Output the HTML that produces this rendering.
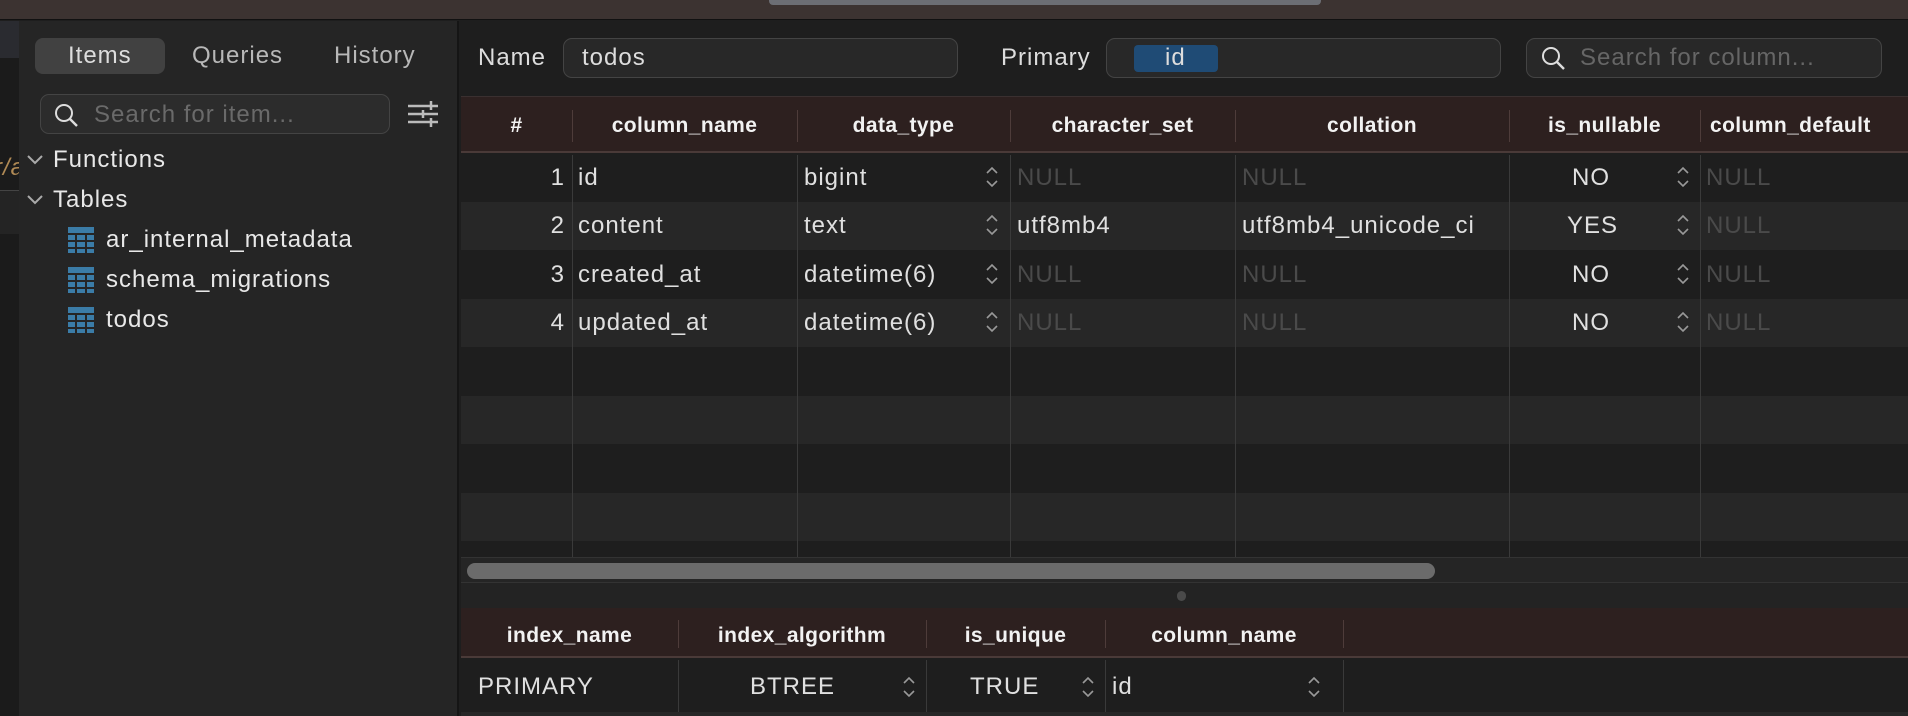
<!DOCTYPE html>
<html><head><meta charset="utf-8"><style>
*{box-sizing:border-box;margin:0;padding:0}
body{width:1908px;height:716px;overflow:hidden;background:#1e1e1e;font-family:"Liberation Sans",sans-serif;color:#e0e0e0;position:relative}
.a{position:absolute}
.t{position:absolute;white-space:nowrap;font-size:24px;line-height:26px;letter-spacing:1px}
.h{position:absolute;white-space:nowrap;font-size:21px;font-weight:bold;color:#f2f2f2;text-align:center;line-height:24px;letter-spacing:0.4px}
.null{color:#4a4a4a}
.vl{position:absolute;width:1px;background:#3a3a3a}
.st{position:absolute;width:12px;height:22px}
</style></head><body>
<div class="a" style="left:0;top:0;width:1908px;height:20px;background:#3c3331;border-bottom:1px solid #111"></div>
<div class="a" style="left:769px;top:0;width:552px;height:5px;background:#6c6e74;border-radius:0 0 4px 4px"></div>
<div class="a" style="left:0;top:21px;width:19px;height:695px;background:#1b1b1b"></div>
<div class="a" style="left:0;top:21px;width:19px;height:37px;background:#2a2b30"></div>
<div class="a" style="left:0;top:190px;width:19px;height:44px;background:#242424;border-top:1px solid #444"></div>
<div class="t" style="left:-6px;top:155px;color:#b08a55;font-style:italic">r/a</div>
<div class="a" style="left:19px;top:21px;width:440px;height:695px;background:#252525;border-right:2px solid #151515"></div>
<div class="a" style="left:35px;top:38px;width:130px;height:36px;background:#414141;border-radius:8px"></div>
<div class="t" style="left:68px;top:43px;color:#ddd">Items</div>
<div class="t" style="left:192px;top:43px;color:#b8b8b8">Queries</div>
<div class="t" style="left:334px;top:43px;color:#b8b8b8">History</div>
<div class="a" style="left:40px;top:94px;width:350px;height:40px;background:#2c2c2c;border:1px solid #444;border-radius:9px"></div>
<svg class="a" style="left:53px;top:103px" width="28" height="26"><circle cx="11" cy="10" r="8" fill="none" stroke="#ddd" stroke-width="2"/><line x1="17" y1="16" x2="24" y2="23" stroke="#ddd" stroke-width="2.4"/></svg>
<div class="t" style="left:94px;top:102px;color:#6a6a6a">Search for item...</div>
<svg class="a" style="left:407px;top:100px" width="32" height="28" stroke="#bbb" stroke-width="2.5"><line x1="1" y1="6" x2="31" y2="6"/><line x1="1" y1="14" x2="31" y2="14"/><line x1="1" y1="22" x2="31" y2="22"/><line x1="24" y1="1" x2="24" y2="10"/><line x1="16" y1="10" x2="16" y2="18"/><line x1="24" y1="18" x2="24" y2="27"/></svg>
<svg class="a" style="left:27px;top:155px" width="16" height="10"><polyline points="1,1 8,8 15,1" fill="none" stroke="#aaa" stroke-width="2"/></svg>
<div class="t" style="left:53px;top:147px;color:#e8e8e8">Functions</div>
<svg class="a" style="left:27px;top:195px" width="16" height="10"><polyline points="1,1 8,8 15,1" fill="none" stroke="#aaa" stroke-width="2"/></svg>
<div class="t" style="left:53px;top:187px;color:#e8e8e8">Tables</div>
<svg width="0" height="0" style="position:absolute"><defs><g id="ti"><rect x="0" y="0" width="26" height="6" fill="#3b7ca7"/><g fill="#3b7ca7"><rect x="0" y="8" width="7" height="5"/><rect x="9" y="8" width="8" height="5"/><rect x="19" y="8" width="7" height="5"/><rect x="0" y="15" width="7" height="5"/><rect x="9" y="15" width="8" height="5"/><rect x="19" y="15" width="7" height="5"/><rect x="0" y="22" width="7" height="4"/><rect x="9" y="22" width="8" height="4"/><rect x="19" y="22" width="7" height="4"/></g></g></defs></svg>
<svg class="a" style="left:68px;top:227px" width="26" height="26"><use href="#ti"/></svg>
<div class="t" style="left:106px;top:227px;color:#e8e8e8">ar_internal_metadata</div>
<svg class="a" style="left:68px;top:267px" width="26" height="26"><use href="#ti"/></svg>
<div class="t" style="left:106px;top:267px;color:#e8e8e8">schema_migrations</div>
<svg class="a" style="left:68px;top:307px" width="26" height="26"><use href="#ti"/></svg>
<div class="t" style="left:106px;top:307px;color:#e8e8e8">todos</div>
<div class="t" style="left:478px;top:45px;color:#ddd">Name</div>
<div class="a" style="left:563px;top:38px;width:395px;height:40px;background:#282828;border:1px solid #444;border-radius:9px"></div>
<div class="t" style="left:582px;top:45px;color:#ddd">todos</div>
<div class="t" style="left:1001px;top:45px;color:#ddd">Primary</div>
<div class="a" style="left:1106px;top:38px;width:395px;height:40px;background:#282828;border:1px solid #444;border-radius:9px"></div>
<div class="a" style="left:1134px;top:45px;width:84px;height:27px;background:#1f4b75;border-radius:4px"></div>
<div class="t" style="left:1165px;top:45px;color:#ddd">id</div>
<div class="a" style="left:1526px;top:38px;width:356px;height:40px;background:#282828;border:1px solid #444;border-radius:9px"></div>
<svg class="a" style="left:1540px;top:46px" width="28" height="26"><circle cx="11" cy="10" r="8" fill="none" stroke="#ddd" stroke-width="2"/><line x1="17" y1="16" x2="24" y2="23" stroke="#ddd" stroke-width="2.4"/></svg>
<div class="t" style="left:1580px;top:45px;color:#666">Search for column...</div>
<div class="a" style="left:461px;top:96px;width:1447px;height:57px;background:#2d201f;border-top:1px solid #3a3030;border-bottom:2px solid #4a3a38"></div>
<div class="a" style="left:461px;top:153px;width:1447px;height:49px;background:#1e1e1e"></div>
<div class="a" style="left:461px;top:202px;width:1447px;height:48px;background:#272727"></div>
<div class="a" style="left:461px;top:250px;width:1447px;height:49px;background:#1e1e1e"></div>
<div class="a" style="left:461px;top:299px;width:1447px;height:48px;background:#272727"></div>
<div class="a" style="left:461px;top:347px;width:1447px;height:49px;background:#1e1e1e"></div>
<div class="a" style="left:461px;top:396px;width:1447px;height:48px;background:#272727"></div>
<div class="a" style="left:461px;top:444px;width:1447px;height:49px;background:#1e1e1e"></div>
<div class="a" style="left:461px;top:493px;width:1447px;height:48px;background:#272727"></div>
<div class="a" style="left:461px;top:541px;width:1447px;height:16px;background:#1e1e1e"></div>
<div class="vl" style="left:572px;top:110px;height:32px;background:#4e3c3a"></div>
<div class="vl" style="left:797px;top:110px;height:32px;background:#4e3c3a"></div>
<div class="vl" style="left:1010px;top:110px;height:32px;background:#4e3c3a"></div>
<div class="vl" style="left:1235px;top:110px;height:32px;background:#4e3c3a"></div>
<div class="vl" style="left:1509px;top:110px;height:32px;background:#4e3c3a"></div>
<div class="vl" style="left:1700px;top:110px;height:32px;background:#4e3c3a"></div>
<div class="vl" style="left:572px;top:155px;height:402px"></div>
<div class="vl" style="left:797px;top:155px;height:402px"></div>
<div class="vl" style="left:1010px;top:155px;height:402px"></div>
<div class="vl" style="left:1235px;top:155px;height:402px"></div>
<div class="vl" style="left:1509px;top:155px;height:402px"></div>
<div class="vl" style="left:1700px;top:155px;height:402px"></div>
<div class="h" style="left:461px;width:111px;top:114px">#</div>
<div class="h" style="left:572px;width:225px;top:114px">column_name</div>
<div class="h" style="left:797px;width:213px;top:114px">data_type</div>
<div class="h" style="left:1010px;width:225px;top:114px">character_set</div>
<div class="h" style="left:1235px;width:274px;top:114px">collation</div>
<div class="h" style="left:1509px;width:191px;top:114px">is_nullable</div>
<div class="h" style="left:1700px;width:220px;top:114px;text-align:left;padding-left:10px">column_default</div>
<svg width="0" height="0" style="position:absolute"><defs><g id="st" fill="none" stroke="#999" stroke-width="1.6"><polyline points="1,7 6,2 11,7"/><polyline points="1,15 6,20 11,15"/></g></defs></svg>
<div class="t" style="left:461px;width:104px;text-align:right;top:165px">1</div>
<div class="t" style="left:578px;top:165px">id</div>
<div class="t" style="left:804px;top:165px">bigint</div>
<svg class="st" style="left:986px;top:166px"><use href="#st"/></svg>
<div class="t null" style="left:1017px;top:165px">NULL</div>
<div class="t null" style="left:1242px;top:165px">NULL</div>
<div class="t" style="left:1572px;top:165px">NO</div>
<svg class="st" style="left:1677px;top:166px"><use href="#st"/></svg>
<div class="t null" style="left:1706px;top:165px">NULL</div>
<div class="t" style="left:461px;width:104px;text-align:right;top:213px">2</div>
<div class="t" style="left:578px;top:213px">content</div>
<div class="t" style="left:804px;top:213px">text</div>
<svg class="st" style="left:986px;top:214px"><use href="#st"/></svg>
<div class="t" style="left:1017px;top:213px">utf8mb4</div>
<div class="t" style="left:1242px;top:213px">utf8mb4_unicode_ci</div>
<div class="t" style="left:1567px;top:213px">YES</div>
<svg class="st" style="left:1677px;top:214px"><use href="#st"/></svg>
<div class="t null" style="left:1706px;top:213px">NULL</div>
<div class="t" style="left:461px;width:104px;text-align:right;top:262px">3</div>
<div class="t" style="left:578px;top:262px">created_at</div>
<div class="t" style="left:804px;top:262px">datetime(6)</div>
<svg class="st" style="left:986px;top:263px"><use href="#st"/></svg>
<div class="t null" style="left:1017px;top:262px">NULL</div>
<div class="t null" style="left:1242px;top:262px">NULL</div>
<div class="t" style="left:1572px;top:262px">NO</div>
<svg class="st" style="left:1677px;top:263px"><use href="#st"/></svg>
<div class="t null" style="left:1706px;top:262px">NULL</div>
<div class="t" style="left:461px;width:104px;text-align:right;top:310px">4</div>
<div class="t" style="left:578px;top:310px">updated_at</div>
<div class="t" style="left:804px;top:310px">datetime(6)</div>
<svg class="st" style="left:986px;top:311px"><use href="#st"/></svg>
<div class="t null" style="left:1017px;top:310px">NULL</div>
<div class="t null" style="left:1242px;top:310px">NULL</div>
<div class="t" style="left:1572px;top:310px">NO</div>
<svg class="st" style="left:1677px;top:311px"><use href="#st"/></svg>
<div class="t null" style="left:1706px;top:310px">NULL</div>
<div class="a" style="left:461px;top:557px;width:1447px;height:26px;background:#252525;border-top:1px solid #333;border-bottom:1px solid #333"></div>
<div class="a" style="left:467px;top:563px;width:968px;height:16px;background:#6b6b6b;border-radius:8px"></div>
<div class="a" style="left:461px;top:583px;width:1447px;height:25px;background:#232323"></div>
<div class="a" style="left:1177px;top:591px;width:9px;height:10px;background:#4a4a4a;border-radius:5px"></div>
<div class="a" style="left:461px;top:608px;width:1447px;height:50px;background:#2d201f;border-bottom:2px solid #4a3a38"></div>
<div class="a" style="left:461px;top:658px;width:1447px;height:58px;background:#1e1e1e"></div>
<div class="vl" style="left:678px;top:620px;height:28px;background:#4e3c3a"></div>
<div class="vl" style="left:926px;top:620px;height:28px;background:#4e3c3a"></div>
<div class="vl" style="left:1105px;top:620px;height:28px;background:#4e3c3a"></div>
<div class="vl" style="left:1343px;top:620px;height:28px;background:#4e3c3a"></div>
<div class="vl" style="left:678px;top:660px;height:56px"></div>
<div class="vl" style="left:926px;top:660px;height:56px"></div>
<div class="vl" style="left:1105px;top:660px;height:56px"></div>
<div class="vl" style="left:1343px;top:660px;height:56px"></div>
<div class="h" style="left:461px;width:217px;top:624px">index_name</div>
<div class="h" style="left:678px;width:248px;top:624px">index_algorithm</div>
<div class="h" style="left:926px;width:179px;top:624px">is_unique</div>
<div class="h" style="left:1105px;width:238px;top:624px">column_name</div>
<div class="t" style="left:478px;top:674px">PRIMARY</div>
<div class="t" style="left:750px;top:674px">BTREE</div>
<svg class="st" style="left:903px;top:676px"><use href="#st"/></svg>
<div class="t" style="left:970px;top:674px">TRUE</div>
<svg class="st" style="left:1082px;top:676px"><use href="#st"/></svg>
<div class="t" style="left:1112px;top:674px">id</div>
<svg class="st" style="left:1308px;top:676px"><use href="#st"/></svg>
<div class="a" style="left:461px;top:712px;width:1447px;height:4px;background:#272727"></div>
</body></html>
